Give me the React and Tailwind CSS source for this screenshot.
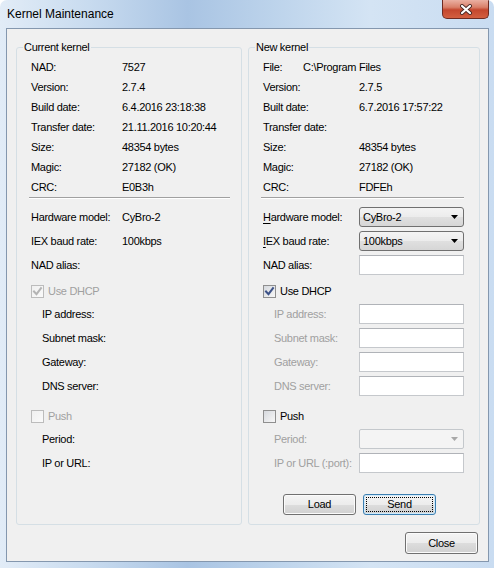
import React from 'react';

// Small Win7-style building blocks for the dialog
function Check({ checked, disabled }) {
  const box = disabled
    ? 'border-[#bcbcbc] bg-[linear-gradient(135deg,#f0f0f0,#fafafa)]'
    : 'border-[#8f8f8f] bg-[linear-gradient(135deg,#d6d9de,#f7f7f7)]';
  return (
    <div className={`w-[13px] h-[13px] border ${box} flex items-center justify-center shrink-0`}>
      {checked && (
        <svg width="11" height="11" viewBox="0 0 11 11">
          <path
            d="M2 5.5 L4.5 8.2 L9 2.2"
            fill="none"
            stroke={disabled ? '#b4b4b4' : '#3d5288'}
            strokeWidth="2"
            strokeLinecap="square"
          />
        </svg>
      )}
    </div>
  );
}

function Combo({ value, disabled }) {
  if (disabled) {
    return (
      <div className="w-[105px] h-[20px] rounded-[2px] border border-[#c4c8cc] bg-[#f4f4f4] flex items-center justify-end pr-[5px]">
        <svg width="7" height="4" viewBox="0 0 7 4">
          <path d="M0 0 H7 L3.5 4 Z" fill="#a8a8a8" />
        </svg>
      </div>
    );
  }
  return (
    <div className="w-[105px] h-[20px] rounded-[3px] border border-[#707070] bg-[linear-gradient(180deg,#f4f4f4_0%,#ececec_50%,#e0e0e0_50%,#d6d6d6_100%)] flex items-center justify-between pl-[3px] pr-[5px]">
      <span>{value}</span>
      <svg width="7" height="4" viewBox="0 0 7 4">
        <path d="M0 0 H7 L3.5 4 Z" fill="#000" />
      </svg>
    </div>
  );
}

function Field() {
  return <div className="w-[105px] h-[20px] bg-white border border-[#c5c8cc] border-t-[#b0b3b8]" />;
}

function Btn({ children, focused }) {
  const edge = focused
    ? 'border-[#3c7fb1] shadow-[inset_0_0_0_1px_#cfeafc] outline-1 outline-dotted outline-black outline-offset-[-4px]'
    : 'border-[#707070] shadow-[inset_0_0_0_1px_#fbfbfb]';
  return (
    <div
      className={`w-[73px] h-[21px] rounded-[3px] border ${edge} bg-[linear-gradient(180deg,#f4f4f4_0%,#ececec_50%,#dddddd_50%,#d1d1d1_100%)] flex items-center justify-center`}
    >
      {children}
    </div>
  );
}

function Info({ label, value, w }) {
  return (
    <div className="h-[20px] flex items-center">
      <span className={w}>{label}</span>
      <span>{value}</span>
    </div>
  );
}

function Sep({ w }) {
  return <div className={`-ml-[2px] ${w} h-[2px] border-t border-t-[#a0a0a0] border-b border-b-white mb-[6px]`} />;
}

const current = [
  ['NAD:', '7527'],
  ['Version:', '2.7.4'],
  ['Build date:', '6.4.2016 23:18:38'],
  ['Transfer date:', '21.11.2016 10:20:44'],
  ['Size:', '48354 bytes'],
  ['Magic:', '27182 (OK)'],
  ['CRC:', 'E0B3h'],
];

const incoming = [
  ['Version:', '2.7.5'],
  ['Built date:', '6.7.2016 17:57:22'],
  ['Transfer date:', ''],
  ['Size:', '48354 bytes'],
  ['Magic:', '27182 (OK)'],
  ['CRC:', 'FDFEh'],
];

export default function App() {
  return (
    <div className="w-[494px] h-[568px] overflow-hidden rounded-t-[7px] bg-[linear-gradient(90deg,#e2ecf7_0%,#c8dbef_18%,#a9c4e3_38%,#bcd3eb_55%,#d4e4f4_75%,#c9dcf1_100%)] flex flex-col font-['Liberation_Sans',Arial,sans-serif] text-[11px] tracking-[-0.3px] text-black select-none">
      {/* title bar */}
      <div className="h-[28px] shrink-0 flex">
        <span className="pl-[7px] pt-[6px] text-[12px] tracking-normal leading-[16px]">Kernel Maintenance</span>
        <div className="ml-auto mr-[5px] w-[47px] h-[19px] rounded-b-[5px] border border-t-0 border-[#6e2b22] bg-[linear-gradient(180deg,#eab0a2_0%,#d9806a_40%,#c4472e_55%,#d35f40_100%)] flex items-center justify-center">
          <svg width="14" height="11" viewBox="0 0 14 11">
            <path d="M3 2 L11 9 M11 2 L3 9" stroke="#4a2a26" strokeWidth="4" strokeLinecap="round" />
            <path d="M3 2 L11 9 M11 2 L3 9" stroke="#ffffff" strokeWidth="2.2" strokeLinecap="round" />
          </svg>
        </div>
      </div>

      {/* client area */}
      <div className="ml-[6px] w-[483px] h-[534px] border border-[#8497ae] bg-[#f0f0f0] flex flex-col">
        <div className="flex gap-[6px] pl-[9px] pt-[11px]">
          {/* current kernel */}
          <fieldset className="w-[226px] h-[485px] border border-[#d5dfe5] rounded-[3px]">
            <legend className="ml-[6px] px-[1px] leading-[14px]">Current kernel</legend>
            <div className="pl-[14px] pt-[3px] flex flex-col">
              {current.map(([l, v]) => (
                <Info key={l} label={l} value={v} w="w-[91px]" />
              ))}
              <Sep w="w-[201px]" />
              <div className="h-[24px] flex items-center">
                <span className="w-[91px]">Hardware model:</span>
                <span>CyBro-2</span>
              </div>
              <div className="h-[24px] flex items-center">
                <span className="w-[91px]">IEX baud rate:</span>
                <span>100kbps</span>
              </div>
              <div className="h-[24px] flex items-center">NAD alias:</div>
              <div className="mt-[3px] h-[22px] flex items-center gap-[4px] text-[#a0a0a0]">
                <Check checked disabled />
                <span>Use DHCP</span>
              </div>
              <div className="pl-[11px] flex flex-col">
                <div className="h-[24px] flex items-center">IP address:</div>
                <div className="h-[24px] flex items-center">Subnet mask:</div>
                <div className="h-[24px] flex items-center">Gateway:</div>
                <div className="h-[24px] flex items-center">DNS server:</div>
              </div>
              <div className="mt-[7px] h-[22px] flex items-center gap-[4px] text-[#a0a0a0]">
                <Check disabled />
                <span>Push</span>
              </div>
              <div className="pl-[11px] flex flex-col">
                <div className="h-[24px] flex items-center">Period:</div>
                <div className="h-[24px] flex items-center">IP or URL:</div>
              </div>
            </div>
          </fieldset>

          {/* new kernel */}
          <fieldset className="w-[232px] h-[485px] border border-[#d5dfe5] rounded-[3px]">
            <legend className="ml-[6px] px-[1px] leading-[14px]">New kernel</legend>
            <div className="pl-[14px] pt-[3px] flex flex-col">
              <Info label="File:" value="C:\Program Files" w="w-[40px]" />
              {incoming.map(([l, v]) => (
                <Info key={l} label={l} value={v} w="w-[96px]" />
              ))}
              <Sep w="w-[203px]" />
              <div className="h-[24px] flex items-center">
                <span className="w-[96px]">
                  <u className="underline-offset-2">H</u>ardware model:
                </span>
                <Combo value="CyBro-2" />
              </div>
              <div className="h-[24px] flex items-center">
                <span className="w-[96px]">
                  <u className="underline-offset-2">I</u>EX baud rate:
                </span>
                <Combo value="100kbps" />
              </div>
              <div className="h-[24px] flex items-center">
                <span className="w-[96px]">NAD alias:</span>
                <Field />
              </div>
              <div className="mt-[3px] h-[22px] flex items-center gap-[4px]">
                <Check checked />
                <span>Use DHCP</span>
              </div>
              {['IP address:', 'Subnet mask:', 'Gateway:', 'DNS server:'].map((l) => (
                <div key={l} className="h-[24px] flex items-center text-[#a0a0a0]">
                  <span className="w-[96px] pl-[11px]">{l}</span>
                  <Field />
                </div>
              ))}
              <div className="mt-[7px] h-[22px] flex items-center gap-[4px]">
                <Check />
                <span>Push</span>
              </div>
              <div className="h-[24px] flex items-center text-[#a0a0a0]">
                <span className="w-[96px] pl-[11px]">Period:</span>
                <Combo disabled />
              </div>
              <div className="h-[24px] flex items-center text-[#a0a0a0]">
                <span className="w-[96px] pl-[11px]">IP or URL (:port):</span>
                <Field />
              </div>
              <div className="mt-[19px] pl-[20px] flex gap-[7px]">
                <Btn>Load</Btn>
                <Btn focused>Send</Btn>
              </div>
            </div>
          </fieldset>
        </div>

        <div className="flex justify-end pr-[10px] pt-[7px]">
          <div className="w-[73px] h-[22px] rounded-[3px] border border-[#707070] shadow-[inset_0_0_0_1px_#fbfbfb] bg-[linear-gradient(180deg,#f4f4f4_0%,#ececec_50%,#dddddd_50%,#d1d1d1_100%)] flex items-center justify-center">
            Close
          </div>
        </div>
      </div>
    </div>
  );
}
